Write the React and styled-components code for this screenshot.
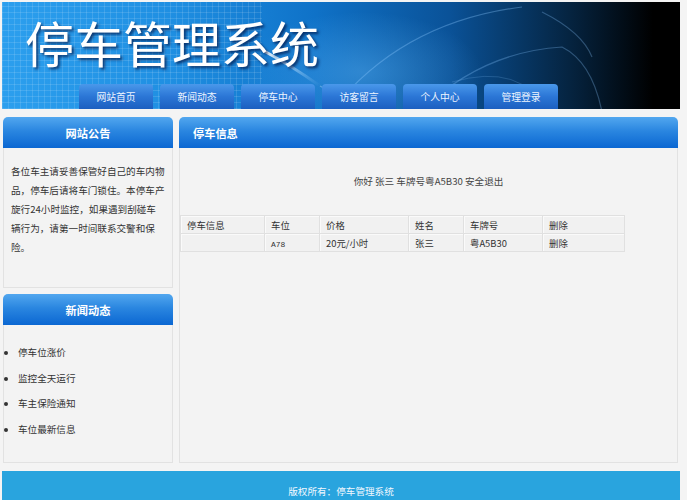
import React from "react";
import styled, { createGlobalStyle } from "styled-components";

const Global = createGlobalStyle`
  html, body { margin: 0; padding: 0; background: #f4f4f4; }
  body { font-family: "Noto Sans CJK SC", "Noto Sans", sans-serif; color: #333; }
`;

const Page = styled.div`
  width: 678px;
  padding: 2px 0 0 2px;
  display: flex;
  flex-direction: column;
`;

const Banner = styled.div`
  position: relative;
  height: 107px;
  overflow: hidden;
  display: flex;
  flex-direction: column;
  background:
    repeating-linear-gradient(90deg, rgba(255,255,255,0.12) 0 1px, transparent 1px 6px),
    repeating-linear-gradient(0deg, rgba(255,255,255,0.12) 0 1px, transparent 1px 6px),
    linear-gradient(90deg, #2c9fee 0%, #1f8fe2 25%, #0f72c8 46%, #0a5298 66%, #05233f 84%, #000 96%);
  background-size: 260px 100%, 260px 100%, 100% 100%;
  background-repeat: no-repeat;
`;

const Deco = styled.svg`
  position: absolute;
  inset: 0;
  pointer-events: none;
`;

const Title = styled.h1`
  position: relative;
  margin: 15px 0 0 23px;
  font-size: 49px;
  line-height: 49px;
  font-weight: 400;
  color: #fff;
  text-shadow: 2px 2px 3px rgba(0, 20, 70, 0.75);
`;

const Nav = styled.nav`
  position: relative;
  margin-top: auto;
  display: flex;
  gap: 7px;
  padding-left: 77px;
`;

const NavButton = styled.a`
  width: 74px;
  height: 25px;
  display: flex;
  align-items: center;
  justify-content: center;
  border-radius: 4px 4px 0 0;
  background: linear-gradient(180deg, #4a98ea 0%, #2b76d6 50%, #1c5fc0 100%);
  color: #eef5ff;
  font-size: 9.8px;
  text-decoration: none;
`;

const Content = styled.div`
  display: flex;
  gap: 6px;
  margin-top: 8px;
  padding-left: 1px;
`;

const Side = styled.div`
  width: 170px;
  display: flex;
  flex-direction: column;
  gap: 6px;
`;

const Panel = styled.section`
  display: flex;
  flex-direction: column;
  width: ${(p) => p.$w || "auto"};
`;

const PanelHead = styled.div`
  height: 31px;
  display: flex;
  align-items: center;
  justify-content: ${(p) => (p.$left ? "flex-start" : "center")};
  padding-left: ${(p) => (p.$left ? "14px" : "0")};
  border-radius: 5px 5px 0 0;
  background: linear-gradient(180deg, #52a7ef 0%, #2a86e0 45%, #0b67d2 100%);
  color: #fff;
  font-size: 11.2px;
  font-weight: 700;
`;

const PanelBody = styled.div`
  height: ${(p) => p.$h}px;
  box-sizing: border-box;
  border: 1px solid #e2e2e2;
  border-top: none;
  background: #f3f3f3;
`;

const Notice = styled.p`
  margin: 0;
  padding: 14px 0 0 7px;
  width: 154px;
  font-size: 9.6px;
  line-height: 19px;
  color: #333;
`;

const NewsList = styled.ul`
  margin: 0;
  padding: 15px 0 0 14px;
  list-style: disc;
  font-size: 9.6px;
  line-height: 25.7px;
  color: #333;
  li { height: 25.7px; }
`;

const Greeting = styled.p`
  margin: 0;
  padding: 24px 0 0;
  text-align: center;
  font-size: 9.6px;
  line-height: 18px;
  color: #444;
`;

const Table = styled.table`
  margin: 25px 0 0 0;
  border-collapse: collapse;
  font-size: 9.4px;
  color: #333;
  td {
    height: 17px;
    padding: 0 0 0 6px;
    border: 1px solid #e0e0e0;
    background: #f1f1f1;
    box-shadow: inset 1px 1px 0 #fafafa;
  }
`;

const Small = styled.span`
  font-family: "Liberation Mono", monospace;
  font-size: 8px;
`;

const Footer = styled.footer`
  margin-top: 8px;
  height: 40px;
  display: flex;
  align-items: center;
  justify-content: center;
  background: #29a4de;
  color: #f2f8ff;
  font-size: 9.6px;
`;

const navItems = ["网站首页", "新闻动态", "停车中心", "访客留言", "个人中心", "管理登录"];
const news = ["停车位涨价", "监控全天运行", "车主保险通知", "车位最新信息"];
const widths = [84, 55, 89, 55, 79, 82];

export default function App() {
  return (
    <>
      <Global />
      <Page>
        <Banner>
          <Deco width="678" height="107" viewBox="0 0 678 107">
            <defs>
              <linearGradient id="streak" x1="0" y1="0" x2="1" y2="1">
                <stop offset="0" stopColor="#ffffff" stopOpacity="0.95" />
                <stop offset="1" stopColor="#9fd4ff" stopOpacity="0" />
              </linearGradient>
              <radialGradient id="glow" cx="0.5" cy="0.5" r="0.5">
                <stop offset="0" stopColor="#6fc3ff" stopOpacity="0.35" />
                <stop offset="1" stopColor="#6fc3ff" stopOpacity="0" />
              </radialGradient>
            </defs>
            <ellipse cx="360" cy="70" rx="120" ry="60" fill="url(#glow)" />
            <path d="M262 49 Q290 64 318 84" stroke="url(#streak)" strokeWidth="3" fill="none" strokeLinecap="round" />
            <path d="M318 84 Q345 100 372 112" stroke="#bfe4ff" strokeOpacity="0.35" strokeWidth="1.2" fill="none" />
            <path d="M330 108 Q400 20 520 5" stroke="#8cc8ff" strokeOpacity="0.35" strokeWidth="1.2" fill="none" />
            <path d="M420 108 Q480 50 560 45 Q590 60 600 110" stroke="#8cc8ff" strokeOpacity="0.3" strokeWidth="1.2" fill="none" />
            <path d="M540 10 Q580 30 590 55" stroke="#8cc8ff" strokeOpacity="0.3" strokeWidth="1.2" fill="none" />
            <path d="M450 80 Q520 60 545 110" stroke="#8cc8ff" strokeOpacity="0.2" strokeWidth="1" fill="none" />
          </Deco>
          <Title>停车管理系统</Title>
          <Nav>
            {navItems.map((n) => (
              <NavButton key={n} href="#">{n}</NavButton>
            ))}
          </Nav>
        </Banner>

        <Content>
          <Side>
            <Panel>
              <PanelHead>网站公告</PanelHead>
              <PanelBody $h={140}>
                <Notice>
                  各位车主请妥善保管好自己的车内物品，停车后请将车门锁住。本停车产旋行24小时监控，如果遇到刮碰车辆行为，请第一时间联系交警和保险。
                </Notice>
              </PanelBody>
            </Panel>
            <Panel>
              <PanelHead>新闻动态</PanelHead>
              <PanelBody $h={138}>
                <NewsList>
                  {news.map((n) => (
                    <li key={n}>{n}</li>
                  ))}
                </NewsList>
              </PanelBody>
            </Panel>
          </Side>

          <Panel $w="499px">
            <PanelHead $left>停车信息</PanelHead>
            <PanelBody $h={315}>
              <Greeting>你好 张三 车牌号粤A5B30 安全退出</Greeting>
              <Table>
                <colgroup>
                  {widths.map((w, i) => (
                    <col key={i} style={{ width: w }} />
                  ))}
                </colgroup>
                <tbody>
                  <tr>
                    <td>停车信息</td>
                    <td>车位</td>
                    <td>价格</td>
                    <td>姓名</td>
                    <td>车牌号</td>
                    <td>删除</td>
                  </tr>
                  <tr>
                    <td></td>
                    <td><Small>A78</Small></td>
                    <td>20元/小时</td>
                    <td>张三</td>
                    <td>粤A5B30</td>
                    <td>删除</td>
                  </tr>
                </tbody>
              </Table>
            </PanelBody>
          </Panel>
        </Content>

        <Footer>版权所有：停车管理系统</Footer>
      </Page>
    </>
  );
}
